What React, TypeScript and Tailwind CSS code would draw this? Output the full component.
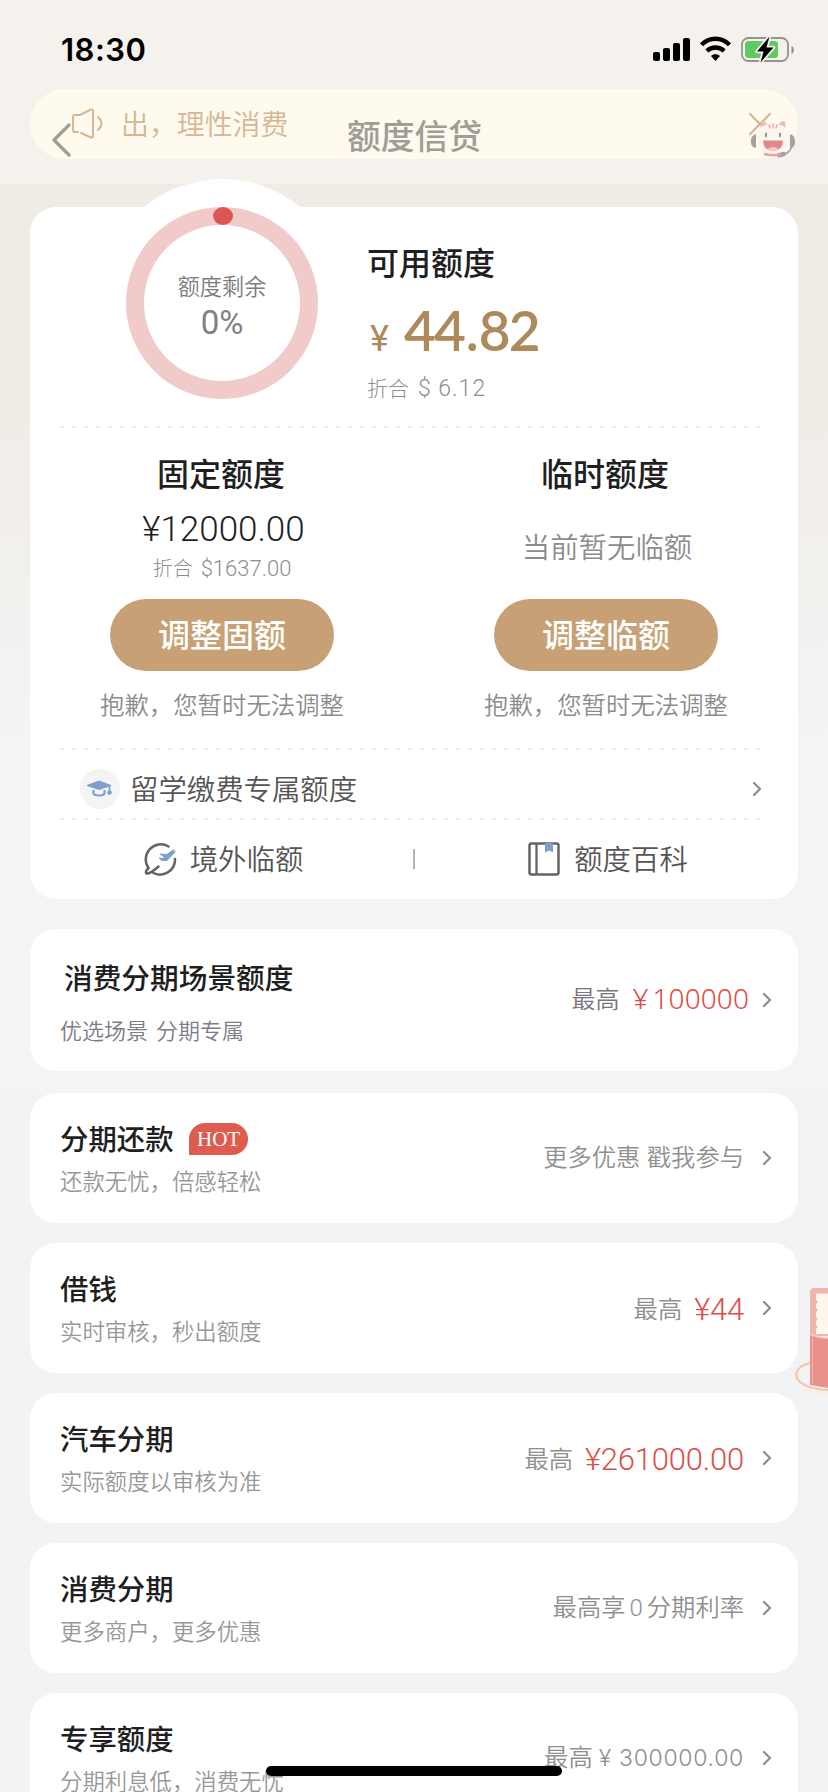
import type { ReactNode } from "react";
import clsx from "clsx";

type Product = {
  title: string;
  desc: string;
  hot?: boolean;
  extra: ReactNode;
};

const products: Product[] = [
  {
    title: "分期还款",
    desc: "还款无忧，倍感轻松",
    hot: true,
    extra: <span className="text-[24.3px] [word-spacing:1px]">更多优惠 戳我参与</span>,
  },
  {
    title: "借钱",
    desc: "实时审核，秒出额度",
    extra: <MaxAmount value="44" />,
  },
  {
    title: "汽车分期",
    desc: "实际额度以审核为准",
    extra: <MaxAmount value="261000.00" />,
  },
  {
    title: "消费分期",
    desc: "更多商户，更多优惠",
    extra: (
      <span className="text-[24.3px]">
        最高享<span className="mx-[4px] font-['Roboto'] text-[24px]">0</span>分期利率
      </span>
    ),
  },
  {
    title: "专享额度",
    desc: "分期利息低，消费无忧",
    extra: (
      <span className="text-[24.3px]">
        最高<span className="ml-[6px] font-['Inter'] text-[23px] tracking-[0.7px]">¥ 300000.00</span>
      </span>
    ),
  },
];

function MaxAmount({ value }: { value: string }) {
  return (
    <span className="flex items-center">
      <span className="mr-3 text-[24.3px]">最高</span>
      <span className="mt-[4px] font-['Roboto'] text-[31px] leading-[36px] font-light tracking-[-0.2px] text-[#dd4f48]">
        ¥{value}
      </span>
    </span>
  );
}

function Chevron({ className }: { className?: string }) {
  return (
    <svg className={className} width="10" height="16" viewBox="0 0 10 16" fill="none">
      <path d="M2 2 L8 8 L2 14" stroke="#8e8e8e" strokeWidth="2.3" strokeLinecap="round" strokeLinejoin="round" />
    </svg>
  );
}

function Dashes() {
  return (
    <div className="mr-[38px] ml-[30px] h-[2px] bg-[repeating-linear-gradient(90deg,#ebebeb_0_4px,transparent_4px_12px)]" />
  );
}

function StatusBar() {
  return (
    <div className="flex h-[89px] items-start justify-between pt-[34px] pr-[33px] pl-[61px]">
      <span className="font-['Inter'] text-[31px] leading-[32px] font-semibold tracking-[0.5px] text-black">18:30</span>
      <svg className="mt-[1px]" width="143" height="30" viewBox="0 0 143 30">
        <rect x="1" y="17" width="7" height="9" rx="2" />
        <rect x="11" y="13" width="7" height="13" rx="2" />
        <rect x="21" y="8" width="7" height="18" rx="2" />
        <rect x="31" y="3" width="7" height="23" rx="2" />
        <g fill="none" stroke="#000" strokeWidth="4.4">
          <path d="M49.5 9.8 C57.5 1.8 69.5 1.8 77.5 9.8" />
          <path d="M54.8 15.8 C60 11.3 67 11.3 72.2 15.8" />
        </g>
        <path d="M59 21 C61.5 18.8 65.5 18.8 68 21 L63.5 26 Z" />
        <rect x="90" y="3" width="46" height="23" rx="6.5" fill="none" stroke="#979390" strokeWidth="1.8" />
        <rect x="93" y="6" width="33" height="17" rx="3.5" fill="#5fca62" />
        <path d="M139.5 11 C142.5 12 142.5 18 139.5 19 Z" fill="#8d8987" />
        <path
          d="M117.5 1.5 L105 16.5 H111.5 L108.5 27.5 L121.5 12.5 H114.5 Z"
          stroke="#f5f1ec"
          strokeWidth="3.5"
          strokeLinejoin="round"
          paintOrder="stroke"
        />
      </svg>
    </div>
  );
}

function Mascot() {
  return (
    <svg width="46" height="40" viewBox="0 0 46 40">
      <path d="M10 11 L11 2.5 Q16 2 18 6 Z M28 6 Q31 1 35 2.5 L36 11 Z" fill="#efb9bb" />
      <path d="M23 5 C35 5 41 11 41 21 C41 32 34 37 23 37 C12 37 5 32 5 21 C5 11 11 5 23 5 Z" fill="#fbf7f0" />
      <path d="M19 6 L20 9 M23 5 V8.5 M27 6 L26 9" stroke="#eba9ab" strokeWidth="1.5" strokeLinecap="round" />
      <path d="M6 15 Q0 17 1 24 Q1 28 6 29 Z M40 15 Q45 16 45 23 Q45 29 40 29 Z" fill="#a6a29e" />
      <path d="M42 27 Q40 34 31 37" fill="none" stroke="#a6a29e" strokeWidth="1.5" />
      <rect x="27" y="33.5" width="9" height="4.5" rx="2" fill="#a6a29e" transform="rotate(-15 31 36)" />
      <ellipse cx="16" cy="16" rx="1.2" ry="2.4" fill="#9c9895" />
      <ellipse cx="30" cy="16" rx="1.2" ry="2.4" fill="#9c9895" />
      <path d="M13 21.5 H33 Q33 31.5 23 31.5 Q13 31.5 13 21.5 Z" fill="#e0898c" />
      <path d="M17 30 Q23 26 29 30 Q23 33 17 30 Z" fill="#f3c4c0" />
      <path d="M14 35 Q22 37 31 35.5" fill="none" stroke="#e8a0a4" strokeWidth="2.4" />
    </svg>
  );
}

function Header() {
  return (
    <header className="relative h-[184px] shrink-0 bg-[#f5f1ec]">
      <StatusBar />
      <div className="mx-[30px] flex h-[70px] items-center rounded-full bg-[#fefaee] pr-[26px] pl-[40px] text-[#d5b795]">
        <svg width="34" height="32" viewBox="0 0 34 32" fill="none" stroke="currentColor" strokeWidth="2" strokeLinecap="round">
          <path d="M8 24 H5 Q3 24 3 22 V9 Q3 7 5 7 H10 L21 1.5 Q23 1 23 3 V28 Q23 30 21 29.5 L11 25" />
          <path d="M28 9 Q35 15.5 28 22" />
        </svg>
        <span className="mb-[2px] ml-[17px] flex-1 text-[27.9px] leading-[40px] font-[350]">出，理性消费</span>
        <svg className="mb-[1px]" width="24" height="24" viewBox="0 0 24 24" stroke="#d3b48d" strokeWidth="2" strokeLinecap="round">
          <path d="M2 2 L22 22 M22 2 L2 22" />
        </svg>
      </div>
      {/* nav sits on top of the scrolled notice */}
      <nav className="absolute inset-x-0 top-[112px] flex h-[50px] items-center justify-between pr-[32px] pl-[51px]">
        <svg className="mt-[5px]" width="22" height="34" viewBox="0 0 22 34" fill="none">
          <path d="M18 2 L3 17 L18 32" stroke="#a09d99" strokeWidth="3.2" strokeLinecap="round" strokeLinejoin="round" />
        </svg>
        <h1 className="mr-[-6px] mb-[5px] text-[33.8px] leading-[46px] font-medium text-[#a09d97]">额度信贷</h1>
        <div className="pt-[4px]">
          <Mascot />
        </div>
      </nav>
    </header>
  );
}

function QuotaRing() {
  return (
    <div className="relative -mt-[28px] ml-[68px] flex size-[248px] flex-col items-center rounded-full bg-white">
      <svg className="absolute inset-0" width="248" height="248" viewBox="0 0 248 248">
        <circle cx="124" cy="124" r="87" fill="none" stroke="#f1caca" strokeWidth="18" />
        <ellipse cx="125" cy="37" rx="10" ry="9" fill="#dc5654" />
      </svg>
      <span className="mt-[90px] text-[22.2px] leading-[32px] font-[350] text-[#7c7c7c]">额度剩余</span>
      <span className="mt-[4px] font-['Roboto'] text-[33px] leading-[36px] text-[#808080]">0%</span>
    </div>
  );
}

type ColumnProps = {
  title: string;
  action: string;
  children: ReactNode;
};

function QuotaColumn({ title, action, children }: ColumnProps) {
  return (
    <div className="flex w-1/2 flex-col items-center pt-[20px]">
      <h2 className="mr-[2px] text-[32px] leading-[48px] font-medium text-[#1f1f1f]">{title}</h2>
      <div className="flex h-[103px] flex-col items-center">{children}</div>
      <button className="h-[72px] w-[224px] rounded-full bg-[#c7a175] pb-[4px] text-[32px] leading-[68px] font-medium text-white">
        {action}
      </button>
      <p className="mt-[13px] text-[24.4px] leading-[40px] font-[350] text-[#8c8c8c]">抱歉，您暂时无法调整</p>
    </div>
  );
}

function QuotaCard() {
  return (
    <section className="mx-[30px] mt-[23px] h-[692px] rounded-[26px] bg-white">
      <div className="flex h-[219px] items-start">
        <QuotaRing />
        <div className="ml-[21px] flex flex-col pt-[30px]">
          <h2 className="text-[32px] leading-[48px] font-medium text-[#1f1f1f]">可用额度</h2>
          <div className="mt-[12px] flex h-[66px] items-baseline font-['Lato'] text-[#ad895c]">
            <span className="ml-[3px] w-[34px] font-['Roboto'] text-[36px] leading-[66px]">¥</span>
            <span className="text-[55px] leading-[66px] font-semibold tracking-[-2px]">
              44<span className="mx-[2px]">.</span>82
            </span>
          </div>
          <p className="mt-[7px] flex items-center text-[#8e8e8e]">
            <span className="mr-[9px] mb-[3px] text-[21px] leading-[34px] font-light">折合</span>
            <span className="font-['Roboto'] text-[23px] leading-[34px] font-light tracking-[1px]">$ 6.12</span>
          </p>
        </div>
      </div>
      <Dashes />

      <div className="flex h-[320px]">
        <QuotaColumn title="固定额度" action="调整固额">
          <span className="mt-[13px] ml-[3px] font-['Roboto'] text-[35px] leading-[42px] font-light text-[#1f1f1f]">
            ¥12000.00
          </span>
          <p className="mt-[1px] flex items-center text-[#8e8e8e]">
            <span className="mr-[8px] mb-[2px] text-[20px] leading-[32px] font-light">折合</span>
            <span className="font-['Roboto'] text-[22px] leading-[32px] font-light">$1637.00</span>
          </p>
        </QuotaColumn>
        <QuotaColumn title="临时额度" action="调整临额">
          <span className="mt-[29px] ml-[2px] text-[28.4px] leading-[42px] font-[350] text-[#8c8c8c]">当前暂无临额</span>
        </QuotaColumn>
      </div>
      <Dashes />

      <div className="flex h-[68px] items-center pt-[9px] pr-[36px] pl-[50px]">
        <span className="flex size-[40px] items-center justify-center rounded-full bg-[#f4f4f5]">
          <svg width="28" height="20" viewBox="0 0 28 20">
            <path d="M1 6.5 L13 2 L25 6.5 L13 10.5 Z" fill="#7c9fcd" stroke="#7c9fcd" strokeLinejoin="round" />
            <path d="M7.5 11 V14 Q7.5 16.5 13 16.5 Q18.5 16.5 18.5 14 V11" fill="none" stroke="#7c9fcd" strokeWidth="2.2" />
            <path d="M23.5 7 V13" stroke="#7c9fcd" strokeWidth="1.6" />
            <circle cx="23.5" cy="13.5" r="2.2" fill="#7c9fcd" />
          </svg>
        </span>
        <span className="mb-[2px] ml-[10px] flex-1 text-[28.4px] leading-[42px] font-[350] text-[#555]">留学缴费专属额度</span>
        <Chevron />
      </div>
      <Dashes />

      <div className="flex h-[78px] items-center">
        <div className="flex flex-1 items-center justify-center pl-[3px]">
          <svg width="34" height="34" viewBox="0 0 34 34" fill="none" strokeLinecap="round">
            <path
              d="M25.5 4.5 A15 15 0 0 0 5.5 26 Q1.5 30 3.5 31.5 Q7 32 15.5 24.5"
              stroke="#646464"
              strokeWidth="2.5"
            />
            <path d="M9.5 30.5 A15 15 0 0 0 32 17" stroke="#646464" strokeWidth="2.5" />
            <path
              d="M30 8 L24 12.5 L17 12 L21.5 15 L20 16.5 L16 16 L19 18.5 L24 18.5 L32 10 Z"
              fill="#7c9fcd"
              stroke="#7c9fcd"
              strokeWidth="1"
              strokeLinejoin="round"
            />
          </svg>
          <span className="mb-[2px] ml-[13px] text-[28.4px] leading-[42px] font-[350] text-[#555]">境外临额</span>
        </div>
        <div className="h-[20px] w-[2px] bg-[#b5b5b5]" />
        <div className="flex flex-1 items-center justify-center pl-[3px]">
          <svg width="32" height="34" viewBox="0 0 32 34">
            <rect x="1.5" y="1.5" width="29" height="31" rx="2" fill="none" stroke="#646464" strokeWidth="2.5" />
            <path d="M8.5 2 V32" stroke="#646464" strokeWidth="2.3" />
            <path d="M17 1 H25 V10.5 L21 8.5 L17 10.5 Z" fill="#7c9fcd" />
          </svg>
          <span className="mb-[2px] ml-[14px] text-[28.4px] leading-[42px] font-[350] text-[#555]">额度百科</span>
        </div>
      </div>
    </section>
  );
}

function SceneCard() {
  return (
    <section className="mx-[30px] mt-[30px] flex h-[142px] items-center justify-between rounded-[26px] bg-white pr-[26px] pl-[30px]">
      <div>
        <h3 className="ml-[4px] text-[28.7px] leading-[42px] font-medium text-[#1f1f1f]">消费分期场景额度</h3>
        <p className="mt-[15px] text-[22px] leading-[32px] font-[350] text-[#7d7c88] [word-spacing:3px]">
          优选场景 分期专属
        </p>
      </div>
      <div className="flex items-center">
        <span className="mr-[13px] mb-[4px] text-[24px] leading-[36px] font-[350] text-[#77767f]">最高</span>
        <span className="mr-[4px] mb-[4px] font-['Noto_Sans'] text-[28px] leading-[36px] font-light text-[#e04a45]">¥</span>
        <span className="mr-[13px] mb-[4px] font-['Noto_Sans'] text-[28px] leading-[36px] font-light tracking-[0.1px] text-[#e04a45]">
          100000
        </span>
        <Chevron />
      </div>
    </section>
  );
}

function ProductCard({ title, desc, hot, extra }: Product) {
  return (
    <section className="mx-[30px] flex h-[130px] shrink-0 items-center justify-between rounded-[26px] bg-white pr-[26px] pl-[30px]">
      <div className="pb-[3px]">
        <div className="flex items-center">
          <h3 className="text-[28.4px] leading-[42px] font-medium text-[#1f1f1f]">{title}</h3>
          {hot && (
            <span className="mt-[3px] ml-[15px] h-[32px] w-[59px] rounded-[16px] rounded-bl-none bg-[#de5b50] pl-[1px] text-center font-['Liberation_Serif'] text-[21px] leading-[32px] text-white">
              HOT
            </span>
          )}
        </div>
        <p className="mt-[4px] text-[22.4px] leading-[34px] font-[350] text-[#989898]">{desc}</p>
      </div>
      <div className="flex items-center gap-[18px] leading-[36px] font-[350] text-[#909090]">
        <div className="pb-[1px]">{extra}</div>
        <Chevron />
      </div>
    </section>
  );
}

function RedPacket() {
  return (
    <svg className="absolute top-[1284px] right-0" width="34" height="116" viewBox="0 0 34 116">
      <ellipse cx="32" cy="106" rx="26" ry="4" fill="#f8eee6" />
      <path d="M34 4 H20 Q16 4 16 8 V52 H34 Z" fill="#f0b5ac" />
      <path
        d="M34 9.5 H22 V16 Q25 18 22 20 V24 Q25 26 22 28 V33 Q25 35 22 37 V41 Q25 43 22 45 V50 H34 Z"
        fill="#fdf8ec"
      />
      <path d="M16 50 Q24 54 34 54 V104 L16 101 Z" fill="#e8918d" />
      <path d="M16 50 Q24 54 34 54" fill="none" stroke="#f6cfc5" strokeWidth="1.5" />
      <path d="M18.5 52 V100" stroke="#f2b3ad" />
      <path d="M16 79 C2 82 -1 92 6 98 Q14 105 34 106" fill="none" stroke="#f1c4ae" strokeWidth="2" />
      <path d="M14 82 C4 86 3 92 8 96" fill="none" stroke="#fbeee4" strokeWidth="1.5" />
    </svg>
  );
}

export default function App() {
  return (
    <div
      className={clsx(
        "relative flex h-[1792px] w-[828px] flex-col overflow-hidden bg-[#f2f3f5]",
        "font-['Noto_Sans_CJK_SC',sans-serif]",
      )}
    >
      <Header />
      <main className="h-[909px] shrink-0 bg-[linear-gradient(180deg,#f0ebe5_0,#f0ece6_220px,#f4f4f4_560px)]">
        <div className="flow-root">
          <QuotaCard />
          <SceneCard />
        </div>
      </main>
      <div className="flex flex-col gap-[20px]">
        {products.map((item) => (
          <ProductCard key={item.title} {...item} />
        ))}
      </div>
      <RedPacket />
      <div className="absolute top-[1766px] left-[266px] h-[10px] w-[296px] rounded-full bg-black" />
    </div>
  );
}
